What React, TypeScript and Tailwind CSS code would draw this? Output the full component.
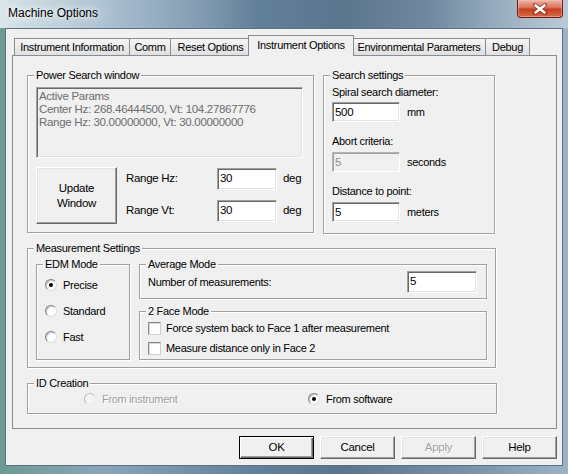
import clsx from "clsx";

function GroupBox({
  label,
  className,
  children,
}: {
  label: string;
  className?: string;
  children?: React.ReactNode;
}) {
  return (
    <div
      className={clsx(
        "relative shrink-0 border border-[#a0a0a0] shadow-[inset_1px_1px_0_#fff,1px_1px_0_#fff]",
        className,
      )}
    >
      <span className="absolute left-[6px] -top-[8px] px-[2px] bg-[#f0f0f0] leading-[14px] whitespace-nowrap">
        {label}
      </span>
      {children}
    </div>
  );
}

function TextBox({
  value,
  className,
  disabled,
}: {
  value: string;
  className?: string;
  disabled?: boolean;
}) {
  return (
    <div
      className={clsx(
        "flex items-center shrink-0 pl-[2px] pb-[1px] text-[11.5px] border",
        disabled
          ? "bg-[#f0f0f0] text-[#8d8d8d] border-t-[#b5b5b5] border-l-[#b5b5b5] border-r-white border-b-white shadow-[inset_1px_1px_0_#a0a0a0]"
          : "bg-white text-black border-t-[#a0a0a0] border-l-[#a0a0a0] border-r-white border-b-white shadow-[inset_1px_1px_0_#696969,inset_-1px_-1px_0_#e3e3e3]",
        className,
      )}
    >
      {value}
    </div>
  );
}

function Radio({
  label,
  checked,
  disabled,
}: {
  label: string;
  checked?: boolean;
  disabled?: boolean;
}) {
  return (
    <div className="flex items-center h-[14px] gap-[6px]">
      <span
        className={clsx(
          "w-[12px] h-[12px] rounded-full flex items-center justify-center border",
          disabled
            ? "bg-[#f4f4f4] border-t-[#b8b8b8] border-l-[#b8b8b8] border-r-[#e8e8e8] border-b-[#e8e8e8]"
            : "bg-white border-t-[#808080] border-l-[#808080] border-r-[#dcdcdc] border-b-[#dcdcdc] shadow-[inset_1px_1px_0_#c8c8c8]",
        )}
      >
        {checked && <span className="w-[4px] h-[4px] rounded-full bg-black" />}
      </span>
      <span
        className={clsx(
          "whitespace-nowrap",
          disabled && "text-[#a0a0a0] [text-shadow:1px_1px_0_#fff]",
        )}
      >
        {label}
      </span>
    </div>
  );
}

function Checkbox({ label }: { label: string }) {
  return (
    <div className="flex items-center h-[13px] gap-[5px]">
      <span className="w-[13px] h-[13px] bg-white border border-t-[#8a8a8a] border-l-[#8a8a8a] border-r-[#cfcfcf] border-b-[#cfcfcf] shadow-[inset_1px_1px_0_#d8d8d8]" />
      <span className="whitespace-nowrap">{label}</span>
    </div>
  );
}

function Btn({
  children,
  className,
  isDefault,
  disabled,
}: {
  children: React.ReactNode;
  className?: string;
  isDefault?: boolean;
  disabled?: boolean;
}) {
  return (
    <div
      className={clsx(
        "flex items-center justify-center text-center leading-[15px] bg-[#f0f0f0] shrink-0",
        isDefault
          ? "border border-black shadow-[inset_1px_1px_0_#fff,inset_-1px_-1px_0_#696969,inset_-2px_-2px_0_#a0a0a0]"
          : "border border-t-white border-l-white border-r-[#696969] border-b-[#696969] shadow-[inset_-1px_-1px_0_#a0a0a0,inset_1px_1px_0_#e3e3e3]",
        disabled && "text-[#a0a0a0] [text-shadow:1px_1px_0_#fff]",
        className,
      )}
    >
      {children}
    </div>
  );
}

function CloseButton() {
  return (
    <div className="ml-auto mr-[5px] w-[46px] h-[18px] rounded-b-[4px] border border-t-0 border-[#6e1f14] bg-[linear-gradient(180deg,#eeb3a3_0%,#dc7a62_42%,#c63c1f_55%,#d86a4c_100%)] shadow-[inset_0_0_0_1px_rgba(255,200,190,0.45)] flex items-center justify-center">
      <svg width="18" height="12" viewBox="0 0 18 12">
        <path d="M4 2 L14 10 M14 2 L4 10" stroke="#5a1408" strokeWidth="4.4" strokeLinecap="round" opacity="0.5" />
        <path d="M4.5 2.5 L13.5 9.5 M13.5 2.5 L4.5 9.5" stroke="#fff" strokeWidth="2.6" strokeLinecap="round" />
      </svg>
    </div>
  );
}

function Tab({
  label,
  className,
  selected,
}: {
  label: string;
  className?: string;
  selected?: boolean;
}) {
  return (
    <div
      className={clsx(
        "flex items-center justify-center border border-b-0 border-[#898c95] whitespace-nowrap shrink-0",
        selected
          ? "relative z-10 h-[21px] -mb-px bg-[#f0f0f0] pb-[1px]"
          : "h-[17px] bg-[linear-gradient(180deg,#f6f6f6_0%,#ebebeb_50%,#e0e0e0_100%)]",
        className,
      )}
    >
      {label}
    </div>
  );
}

export default function App() {
  return (
    <div className="w-[568px] h-[474px] flex flex-col overflow-hidden font-['Liberation_Sans',Arial,sans-serif] text-[11px] tracking-[-0.3px] text-black bg-[linear-gradient(90deg,#6c9a91_0%,#8aa5ba_18%,#62809a_45%,#5b758e_60%,#7891a7_82%,#9db3c5_100%)]">
      <div className="h-[28px] flex items-start shrink-0 bg-[linear-gradient(90deg,rgba(230,238,245,0.9)_0%,rgba(200,215,228,0.45)_22%,rgba(255,255,255,0)_45%,rgba(255,255,255,0)_75%,rgba(220,230,238,0.45)_100%)]">
        <span className="ml-[8px] mt-[6px] text-[12px] tracking-normal leading-[15px] [text-shadow:0_0_6px_#fff,0_0_10px_#fff]">
          Machine Options
        </span>
        <CloseButton />
      </div>

      <div className="mx-[5px] h-[438px] shrink-0 border border-[#5d7185] bg-[#f0f0f0] flex flex-col">
        {/* tabs */}
        <div className="h-[26px] flex items-end pl-[8px] shrink-0">
          <Tab label="Instrument Information" className="w-[116px]" />
          <Tab label="Comm" className="w-[42px] -ml-px" />
          <Tab label="Reset Options" className="w-[81px] -ml-px" />
          <Tab label="Instrument Options" className="w-[106px] -ml-[3px]" selected />
          <Tab label="Environmental Parameters" className="w-[134px] -ml-[2px]" />
          <Tab label="Debug" className="w-[45px] -ml-px" />
        </div>

        {/* tab page */}
        <div className="ml-[6px] w-[545px] h-[374px] shrink-0 border border-[#898c95] bg-[#f0f0f0] pl-[14px] pt-[19px]">
          <div className="flex items-start gap-[9px]">
            <GroupBox label="Power Search window" className="w-[287px] h-[158px]">
              <div className="ml-[8px] mt-[11px] w-[267px] h-[71px] bg-[#f0f0f0] text-[#6d6d6d] pl-[2px] pt-[2px] leading-[13px] text-[11.5px] border border-t-[#a0a0a0] border-l-[#a0a0a0] border-r-white border-b-white shadow-[inset_1px_1px_0_#696969,inset_-1px_-1px_0_#e3e3e3]">
                <div>Active Params</div>
                <div>Center Hz: 268.46444500, Vt: 104.27867776</div>
                <div>Range Hz: 30.00000000, Vt: 30.00000000</div>
              </div>
              <div className="flex ml-[8px] mt-[9px]">
                <Btn className="w-[81px] h-[57px] text-[11.5px]">
                  Update
                  <br />
                  Window
                </Btn>
                <div className="ml-[9px] mt-[1px] flex flex-col gap-[10px] text-[11.5px]">
                  <div className="flex items-center h-[22px]">
                    <span className="w-[91px]">Range Hz:</span>
                    <TextBox value="30" className="w-[60px] h-[22px]" />
                    <span className="ml-[6px]">deg</span>
                  </div>
                  <div className="flex items-center h-[22px]">
                    <span className="w-[91px]">Range Vt:</span>
                    <TextBox value="30" className="w-[60px] h-[22px]" />
                    <span className="ml-[6px]">deg</span>
                  </div>
                </div>
              </div>
            </GroupBox>

            <GroupBox label="Search settings" className="w-[172px] h-[159px]">
              <div className="pl-[8px] flex flex-col items-start leading-[14px]">
                <div className="mt-[9px]">Spiral search diameter:</div>
                <div className="mt-[3px] flex items-center">
                  <TextBox value="500" className="w-[68px] h-[20px]" />
                  <span className="ml-[7px]">mm</span>
                </div>
                <div className="mt-[12px]">Abort criteria:</div>
                <div className="mt-[4px] flex items-center">
                  <TextBox value="5" className="w-[68px] h-[20px]" disabled />
                  <span className="ml-[7px]">seconds</span>
                </div>
                <div className="mt-[12px]">Distance to point:</div>
                <div className="mt-[4px] flex items-center">
                  <TextBox value="5" className="w-[68px] h-[20px]" />
                  <span className="ml-[7px]">meters</span>
                </div>
              </div>
            </GroupBox>
          </div>

          <GroupBox label="Measurement Settings" className="mt-[14px] w-[469px] h-[120px]">
            <div className="flex ml-[8px] mt-[15px] gap-[9px]">
              <GroupBox label="EDM Mode" className="w-[94px] h-[96px]">
                <div className="ml-[8px] mt-[13px] flex flex-col gap-[12px]">
                  <Radio label="Precise" checked />
                  <Radio label="Standard" />
                  <Radio label="Fast" />
                </div>
              </GroupBox>
              <div className="flex flex-col gap-[12px]">
                <GroupBox label="Average Mode" className="w-[348px] h-[35px]">
                  <div className="mt-[6px] pl-[8px] pr-[9px] h-[22px] flex items-center justify-between">
                    <span>Number of measurements:</span>
                    <TextBox value="5" className="w-[70px] h-[22px]" />
                  </div>
                </GroupBox>
                <GroupBox label="2 Face Mode" className="w-[348px] h-[49px]">
                  <div className="ml-[8px] mt-[10px] flex flex-col gap-[7px]">
                    <Checkbox label="Force system back to Face 1 after measurement" />
                    <Checkbox label="Measure distance only in Face 2" />
                  </div>
                </GroupBox>
              </div>
            </div>
          </GroupBox>

          <GroupBox label="ID Creation" className="mt-[15px] w-[470px] h-[31px]">
            <div className="flex mt-[8px]">
              <div className="ml-[56px] w-[224px]">
                <Radio label="From instrument" disabled />
              </div>
              <Radio label="From software" checked />
            </div>
          </GroupBox>
        </div>

        {/* dialog buttons */}
        <div className="mt-[7px] flex justify-end gap-[6px] pr-[5px] text-[11.5px]">
          <Btn className="w-[75px] h-[23px]" isDefault>
            OK
          </Btn>
          <Btn className="w-[75px] h-[23px]">Cancel</Btn>
          <Btn className="w-[75px] h-[23px]" disabled>
            Apply
          </Btn>
          <Btn className="w-[75px] h-[23px]">Help</Btn>
        </div>
      </div>
    </div>
  );
}
